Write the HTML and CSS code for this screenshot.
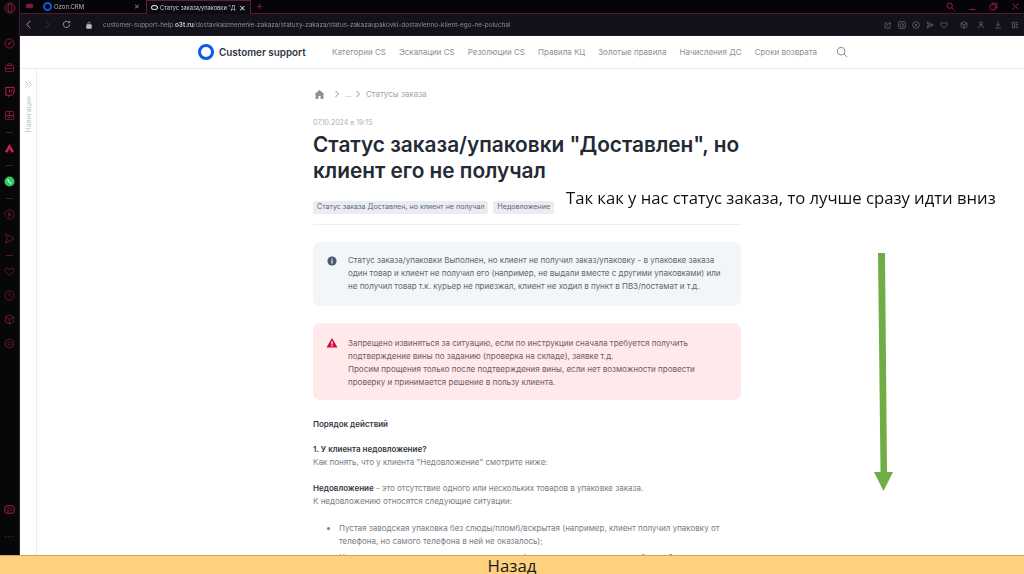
FILE: index.html
```html
<!DOCTYPE html>
<html lang="ru">
<head>
<meta charset="utf-8">
<title>Статус заказа</title>
<link rel="stylesheet" href="styles.css">
</head>
<body>
<div class="slide">
  <div class="screen">
    <aside class="rail">
      <svg class="rail-logo" viewBox="0 0 12 12"><circle cx="6" cy="6" r="5"/><ellipse cx="6" cy="6" rx="2.2" ry="4"/></svg>
      <svg class="ri" viewBox="0 0 12 12"><circle cx="6" cy="6" r="5"/><path d="M4 8l2-3 2-1-1 2z"/></svg>
      <svg class="ri" viewBox="0 0 12 12"><rect x="1.500" y="4" width="9" height="6.500" rx="1"/><path d="M4 4V2h4v2M1.500 7h9"/></svg>
      <svg class="ri ri-bright" viewBox="0 0 12 12"><path d="M2 1.500h9v6l-2.500 2.500H6.500L5 11.500V10H2z"/><path d="M6 4v3M8.500 4v3"/></svg>
      <svg class="ri" viewBox="0 0 12 12"><rect x="1.500" y="1.500" width="9" height="9" rx="1"/><path d="M1.500 6h9M6 1.500V6M3.500 8h5"/></svg>
      <i class="rule"></i>
      <svg class="ri ri-fill" viewBox="0 0 12 12"><path d="M6 1l5 8.500-2.500 1L6 6.500 3.500 10.500 1 9.500z"/></svg>
      <i class="rule"></i>
      <svg class="ri ri-wa" viewBox="0 0 12 12"><circle cx="6" cy="6" r="5.500"/><path d="M4 3.500c-1 1.500 2.500 5.500 4.500 4.500l-.8-1.300-1 .4-1.500-1.700.5-1z"/></svg>
      <i class="rule"></i>
      <svg class="ri ri-dim" viewBox="0 0 12 12"><circle cx="6" cy="6" r="5"/><path d="M5 4l3 2-3 2z"/></svg>
      <svg class="ri ri-dim" viewBox="0 0 12 12"><path d="M1.500 1l9.500 5-9.500 5 2-5z"/></svg>
      <i class="rule"></i>
      <svg class="ri ri-dim" viewBox="0 0 12 12"><path d="M6 10.500L1.500 6c-1.500-2 .5-4.500 2.500-3.500L6 4l2-1.500c2-1 4 1.500 2.500 3.500z"/></svg>
      <svg class="ri ri-dim" viewBox="0 0 12 12"><circle cx="6" cy="6" r="5"/><path d="M6 3v3l2 1.500"/></svg>
      <svg class="ri ri-dim" viewBox="0 0 12 12"><path d="M6 1l4.500 2.500v5L6 11 1.500 8.500v-5zM1.500 3.500L6 6l4.500-2.500M6 6v5"/></svg>
      <svg class="ri ri-dim" viewBox="0 0 12 12"><path d="M6 1l4.500 2.500v5L6 11 1.500 8.500v-5z"/><circle cx="6" cy="6" r="1.800"/></svg>
      <span class="rail-space"></span>
      <svg class="ri ri-bottom" viewBox="0 0 12 12"><rect x="1" y="2" width="10" height="8" rx="2"/><path d="M3.500 4.500h2M3.500 7.500h2M7 4.500c1.500 0 1.500 3 0 3"/></svg>
      <span class="rail-dots">•••</span>
    </aside>
    <div class="window">
      <div class="tabs">
        <svg class="tab-game" viewBox="0 0 12 8"><rect x="1" y="1" width="10" height="6" rx="2.500"/></svg>
        <div class="tab">
          <span class="ozon-ring"></span><span class="tab-title">Ozon.CRM</span><span class="tab-x">✕</span>
        </div>
        <div class="tab tab-active">
          <span class="tab-eye"></span><span class="tab-title">Статус заказа/упаковки "Д</span><span class="tab-x">✕</span>
        </div>
        <span class="tab-plus">+</span>
        <div class="win-controls">
          <svg viewBox="0 0 12 12"><circle cx="5" cy="5" r="3.500"/><path d="M8 8l3 3"/></svg>
          <svg viewBox="0 0 12 12"><path d="M2 10h8"/></svg>
          <svg viewBox="0 0 12 12"><rect x="1.500" y="3.500" width="7" height="7" rx="1.500"/><path d="M4 3V1.500h6.500V8H9"/></svg>
          <svg viewBox="0 0 12 12"><path d="M2 2l8 8M10 2l-8 8"/></svg>
        </div>
      </div>
      <div class="toolbar">
        <svg class="nav-ic" viewBox="0 0 10 10"><path d="M7 1L3 5l4 4"/></svg>
        <svg class="nav-ic nav-off" viewBox="0 0 10 10"><path d="M3 1l4 4-4 4"/></svg>
        <svg class="nav-ic" viewBox="0 0 10 10"><path d="M8.500 5a3.500 3.500 0 1 1-1-2.500M8.500 1v2h-2"/></svg>
        <svg class="lock" viewBox="0 0 10 10"><rect x="2" y="4.500" width="6" height="5" rx=".8"/><path d="M3.500 4.500V3a1.500 1.500 0 0 1 3 0v1.500"/></svg>
        <div class="url">customer-support-help.<b>o3t.ru</b>/dostavkaizmenenie-zakaza/statusy-zakaza/status-zakazaupakovki-dostavlenno-klient-ego-ne-poluchal</div>
        <div class="tools">
          <svg viewBox="0 0 12 12"><path d="M9 6.500V10.500H1.500V3H5M4.500 7.500c.5-3 2.500-4 5-4M8 1.500l2.500 2-2.500 2"/></svg>
          <svg viewBox="0 0 12 12"><rect x="1" y="1" width="10" height="10" rx="2"/><circle cx="6" cy="6.500" r="2.500"/></svg>
          <svg viewBox="0 0 12 12"><circle cx="6" cy="6" r="5"/><path d="M4 4l4 4M8 4l-4 4"/></svg>
          <svg viewBox="0 0 12 12"><path d="M1.500 1.500l9.500 4.500-9.500 4.500 2-4.500zM3.500 6H8"/></svg>
          <svg viewBox="0 0 12 12"><path d="M6 10.500L1.500 6c-1.500-2 .5-4.500 2.500-3.500L6 4l2-1.500c2-1 4 1.500 2.500 3.500z"/></svg>
          <svg class="tool-gap" viewBox="0 0 12 12"><path d="M6 1l4.500 2.500v5L6 11 1.500 8.500v-5zM1.500 3.500L6 6l4.500-2.500M6 6v5"/></svg>
          <svg class="tool-wide" viewBox="0 0 12 12"><circle cx="6" cy="3.500" r="2"/><path d="M2.500 10.500c0-5 7-5 7 0"/></svg>
          <svg class="tool-wide" viewBox="0 0 12 12"><path d="M6 1v6.500M3.500 5L6 7.500 8.500 5M1.500 10.500h9"/></svg>
          <svg class="tool-wide" viewBox="0 0 12 12"><path d="M2 2h3.500v8H2zM7 2.500h3.500M7 5h3.500M7 7.500h3.500M7 10h3.500"/></svg>
        </div>
      </div>
      <div class="site">
        <header class="site-head">
          <div class="brand"><span class="brand-ring"></span><span class="brand-name">Customer support</span></div>
          <nav class="site-nav">
            <a>Категории CS</a><a>Эскалации CS</a><a>Резолюции CS</a><a>Правила КЦ</a><a>Золотые правила</a><a>Начисления ДС</a><a>Сроки возврата</a>
          </nav>
          <svg class="site-search" viewBox="0 0 14 14"><circle cx="6" cy="6" r="4.500"/><path d="M9.500 9.500L13 13"/></svg>
        </header>
        <div class="site-body">
          <div class="side-nav">
            <svg class="side-chev" viewBox="0 0 10 10"><path d="M1.500 1.500L5 5 1.500 8.500M5 1.500L8.500 5 5 8.500"/></svg>
            <span class="side-label">Навигация</span>
          </div>
          <main class="article">
            <div class="crumbs">
              <svg class="crumb-home" viewBox="0 0 12 12"><path d="M6 1L.8 5.500l1 .8V11h3V7.500h2.400V11h3V6.300l1-.8z"/></svg>
              <svg class="crumb-sep" viewBox="0 0 6 8"><path d="M1.500 1L4.500 4l-3 3"/></svg>
              <span class="crumb-dots">...</span>
              <svg class="crumb-sep" viewBox="0 0 6 8"><path d="M1.500 1L4.500 4l-3 3"/></svg>
              <span>Статусы заказа</span>
            </div>
            <div class="date">07.10.2024 в 19:15</div>
            <h1>Статус заказа/упаковки "Доставлен", но клиент его не получал</h1>
            <div class="tags"><span>Статус заказа Доставлен, но клиент не получал</span><span>Недовложение</span></div>
            <hr class="divider">
            <div class="note note-info">
              <svg class="note-ic" viewBox="0 0 12 12"><circle cx="6" cy="6" r="5.500" class="ic-info"/><rect x="5.300" y="5.200" width="1.400" height="3.800" fill="#fff"/><rect x="5.300" y="3" width="1.400" height="1.400" fill="#fff"/></svg>
              <p>Статус заказа/упаковки Выполнен, но клиент не получил заказ/упаковку - в упаковке заказа один товар и клиент не получил его (например, не выдали вместе с другими упаковками) или не получил товар т.к. курьер не приезжал, клиент не ходил в пункт в ПВЗ/постамат и т.д.</p>
            </div>
            <div class="note note-warn">
              <svg class="note-ic note-ic-warn" viewBox="0 0 12 12"><path d="M6 1L11.500 10.500H.5z" class="ic-warn"/><rect x="5.400" y="4.300" width="1.200" height="3.300" fill="#fff"/><rect x="5.400" y="8.200" width="1.200" height="1.200" fill="#fff"/></svg>
              <p>Запрещено извиняться за ситуацию, если по инструкции сначала требуется получить подтверждение вины по заданию (проверка на складе), заявке т.д.<br>Просим прощения только после подтверждения вины, если нет возможности провести проверку и принимается решение в пользу клиента.</p>
            </div>
            <p class="copy copy-first"><strong>Порядок действий</strong></p>
            <p class="copy"><strong>1. У клиента недовложение?</strong><br>Как понять, что у клиента "Недовложение" смотрите ниже:</p>
            <p class="copy"><strong>Недовложение</strong> - это отсутствие одного или нескольких товаров в упаковке заказа.<br>К недовложению относятся следующие ситуации:</p>
            <ul class="copy-list">
              <li>Пустая заводская упаковка без слюды/пломб/вскрытая (например, клиент получил упаковку от телефона, но самого телефона в ней не оказалось);</li>
              <li>Не хватает одного или нескольких предметов (например, клиент заказал набор из 3 кружек, а получил 2);</li>
            </ul>
          </main>
        </div>
      </div>
    </div>
  </div>
  <footer class="back">Назад</footer>
  <div class="callout">Так как у нас статус заказа, то лучше сразу идти вниз</div>
  <svg class="arrow" viewBox="0 0 21 238"><path d="M5 0h7l2 219h6L10.500 238 1 219h6.500z"/></svg>
</div>
</body>
</html>
```
FILE: styles.css
```css
* { box-sizing: border-box; }
html, body { margin: 0; padding: 0; height: 100%; overflow: hidden; background: #fff; }
.slide { position: relative; width: 1024px; height: 574px; display: flex; flex-direction: column; font-family: Inter, "Liberation Sans", sans-serif; overflow: hidden; }
.screen { flex: 1; min-height: 0; display: flex; filter: blur(.35px); }

.rail { width: 20px; flex: none; background: #070609; display: flex; flex-direction: column; align-items: center; padding-top: 2px; border-right: 1px solid #3a1f2c; }
.rail svg { fill: none; stroke: #8d1c38; stroke-width: 1; }
.rail-logo { width: 12px; height: 12px; stroke: #7d1c33; margin-bottom: 24px; flex: none; }
.ri { width: 11px; height: 11px; margin-bottom: 13px; flex: none; }
.rail .ri-bright { stroke: #c62545; }
.rail .ri-fill { fill: #c62545; stroke: none; }
.rail .ri-wa { fill: #2ecb63; stroke: none; }
.rail .ri-wa path { fill: #fff; }
.rail .ri-dim { stroke: #6d1a30; }
.rule { display: block; width: 7px; height: 1px; background: #40202b; margin: -2px 0 10px; flex: none; }
.rail-space { flex: 1; }
.rail .ri-bottom { stroke: #c02445; margin-bottom: 20px; }
.rail-dots { color: #6e3046; font-size: 4px; letter-spacing: 1px; margin-bottom: 16px; line-height: 4px; }

.window { flex: 1; min-width: 0; display: flex; flex-direction: column; }
.tabs { height: 14px; flex: none; background: #050408; display: flex; align-items: stretch; position: relative; border-bottom: 1px solid #4f1a2a; color: #b9b9bf; }
.tab-game { width: 9px; height: 8px; margin: 2px 9px 0 5px; fill: #7d1d33; stroke: none; flex: none; }
.tab { width: 103px; flex: none; display: flex; align-items: center; font-size: 6px; padding-right: 6px; }
.ozon-ring { width: 9px; height: 9px; border: 2px solid #0a5de0; border-radius: 50%; margin-right: 2px; flex: none; }
.tab-title { flex: 1; white-space: nowrap; }
.tab-x { font-size: 7px; color: #8c8c90; }
.tab-active { width: 105px; background: #0c0a12; color: #d3d3d6; border: 1px solid #6b1b30; border-bottom: 0; padding: 0 4px; margin-bottom: -1px; }
.tab-active .tab-title { font-size: 5.700px; }
.tab-active .tab-x { color: #dcdcdc; font-size: 8px; }
.tab-eye { width: 7px; height: 5px; border: 1.500px solid #e5e5e5; border-radius: 50%; margin-right: 2px; flex: none; }
.tab-plus { color: #8d2238; font-size: 11px; line-height: 12px; margin-left: 5px; }
.win-controls { margin-left: auto; display: flex; align-items: center; gap: 12.500px; padding-right: 4.500px; }
.win-controls svg { width: 9px; height: 9px; fill: none; stroke: #a01c3a; stroke-width: 1.300; }

.toolbar { height: 22px; flex: none; background: #14111c; display: flex; align-items: center; padding-left: 4px; border-bottom: 1px solid #2a1a22; color: #a9a9ae; }
.nav-ic { width: 9px; height: 9px; fill: none; stroke: #a5a5a9; stroke-width: 1; margin-right: 10px; flex: none; }
.nav-off { stroke: #3a3a42; }
.lock { width: 8px; height: 8px; fill: #b9b9bd; stroke: #b9b9bd; stroke-width: .8; margin: 0 10px 0 4px; flex: none; }
.lock path { fill: none; }
.url { font-size: 6.380px; white-space: nowrap; color: #8e8e94; }
.url b { color: #d0d0d4; font-weight: 600; }
.tools { margin-left: auto; display: flex; align-items: center; gap: 6px; padding-right: 5px; }
.tools svg { width: 8px; height: 8px; fill: none; stroke: #7e7e88; stroke-width: .9; }
.tools .tool-gap { margin-left: 6px; }
.tools .tool-wide { margin-left: 3px; }

.site { flex: 1; min-height: 0; background: #fff; display: flex; flex-direction: column; }
.site-head { height: 33px; flex: none; display: flex; align-items: center; border-bottom: 1px solid #ececee; padding-left: 178px; }
.brand { display: flex; align-items: center; gap: 5px; width: 134px; flex: none; }
.brand-ring { width: 16px; height: 16px; border: 3.500px solid #0b5ce6; border-radius: 50%; flex: none; }
.brand-name { font-size: 9.900px; font-weight: 600; color: #30353f; white-space: nowrap; }
.site-nav { display: flex; gap: 13px; font-size: 8px; color: #8b8f98; white-space: nowrap; }
.site-search { width: 12px; height: 12px; fill: none; stroke: #83878f; stroke-width: 1.100; margin-left: 19px; }

.site-body { flex: 1; min-height: 0; display: flex; overflow: hidden; }
.side-nav { width: 17px; flex: none; border-right: 1px solid #ececee; display: flex; flex-direction: column; align-items: center; padding-top: 11px; }
.side-chev { width: 9px; height: 9px; fill: none; stroke: #b9bcc2; stroke-width: .9; margin-left: 1px; }
.side-label { writing-mode: vertical-rl; transform: rotate(180deg); font-size: 7px; color: #c2c5ca; margin-top: 7px; }

.article { width: 428px; margin-left: 276px; flex: none; padding-top: 19px; color: #7c808a; }
.crumbs { display: flex; align-items: center; height: 12px; font-size: 8px; color: #a2a6ad; }
.crumb-home { width: 11px; height: 11px; fill: #8c9097; margin: 0 9px 0 1px; }
.crumb-sep { width: 6px; height: 8px; fill: none; stroke: #8c9097; stroke-width: 1; margin-right: 5px; }
.crumb-dots { margin-right: 3px; }
.date { font-size: 7px; color: #aeb1b7; margin-top: 18px; line-height: 9px; }
h1 { margin: 5px 0 0; font-size: 20.800px; line-height: 26px; font-weight: 600; color: #242a35; }
.tags { display: flex; gap: 5px; margin-top: 17px; }
.tags span { background: #e9edf2; color: #616670; font-size: 7.100px; line-height: 12.500px; padding: 0 4px; border-radius: 2px; white-space: nowrap; }
.divider { border: 0; border-top: 1px solid #eceef0; margin: 10px 0 17px; }
.note { display: flex; border-radius: 7px; padding: 12px 16px 10px 14px; gap: 11px; }
.note p { margin: 0; font-size: 8px; line-height: 13px; }
.note-info { background: #f3f6f9; color: #61666f; height: 64px; }
.note-warn { background: #ffe9eb; color: #6c6066; margin-top: 17px; height: 77px; }
.note-warn p { margin-top: 2px; }
.note-ic { width: 10px; height: 10px; flex: none; margin-top: 2px; }
.note-ic-warn { width: 12px; height: 12px; margin: 2px -1px 0 -1px; }
.ic-info { fill: #4a5874; }
.ic-warn { fill: #d5083f; }
.copy { margin: 0 0 12.500px; font-size: 8px; line-height: 13px; color: #787c85; }
.copy strong { color: #33383f; font-weight: 600; }
.copy-first { margin-top: 18px; }
.copy-list { margin: 14px 0 0; padding-left: 26px; font-size: 8px; line-height: 13px; color: #787c85; }
.copy-list li { margin-bottom: 3px; }

.back { height: 19px; flex: none; background: #fed07f; border-top: 1px solid #c4ad6c; text-align: center; font-family: "Open Sans", sans-serif; font-size: 16.800px; line-height: 20px; color: #1a1a1a; }
.callout { position: absolute; left: 566px; top: 186px; font-family: "Open Sans", sans-serif; font-size: 16.650px; line-height: 24px; color: #111; white-space: nowrap; }
.arrow { position: absolute; left: 873px; top: 253px; width: 21px; height: 238px; fill: #70ad47; }
```
